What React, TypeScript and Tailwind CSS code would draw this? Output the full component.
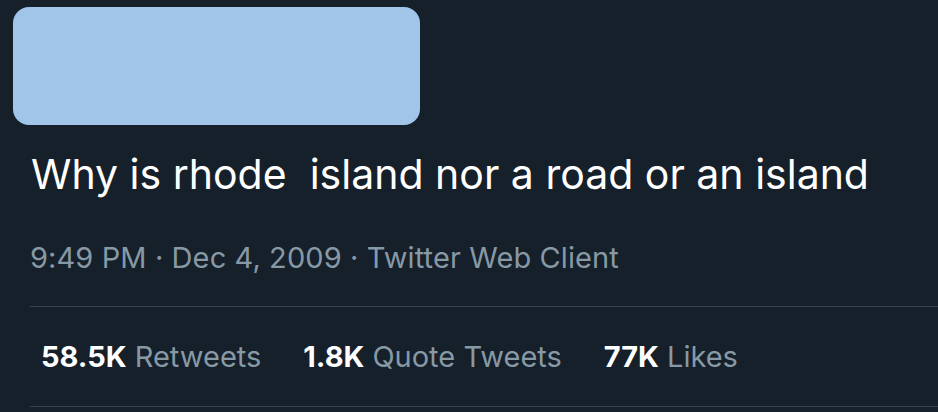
export default function App() {
  const stats = [
    { value: "58.5K", label: "Retweets" },
    { value: "1.8K", label: "Quote Tweets" },
    { value: "77K", label: "Likes" },
  ];

  return (
    <div className="h-[412px] w-[938px] overflow-hidden bg-[#15202b] font-['Inter',sans-serif]">
      <div className="pl-[13px] pt-[7px]">
        <div className="h-[118px] w-[407px] rounded-[16px] bg-[#a1c4e9]" />
      </div>
      <div className="pl-[30px]">
        <p className="mt-[23px] whitespace-pre pl-px text-[41px] leading-[52px] text-white">
          Why is rhode  island nor a road or an island
        </p>
        <p className="mt-[40px] text-[29px] leading-[36px] tracking-[0.1px] text-[#8899a6]">
          9:49 PM · Dec 4, 2009 · Twitter Web Client
        </p>
        <div className="mt-[30px] border-t border-[#38444d]" />
        <div className="flex h-[99px] items-center gap-[42px] pl-[11px] text-[29px] leading-[36px]">
          {stats.map((s) => (
            <span key={s.label} className="flex gap-[8px]">
              <span className="font-bold text-white">{s.value}</span>
              <span className="text-[#8899a6]">{s.label}</span>
            </span>
          ))}
        </div>
        <div className="border-t border-[#38444d]" />
      </div>
    </div>
  );
}
